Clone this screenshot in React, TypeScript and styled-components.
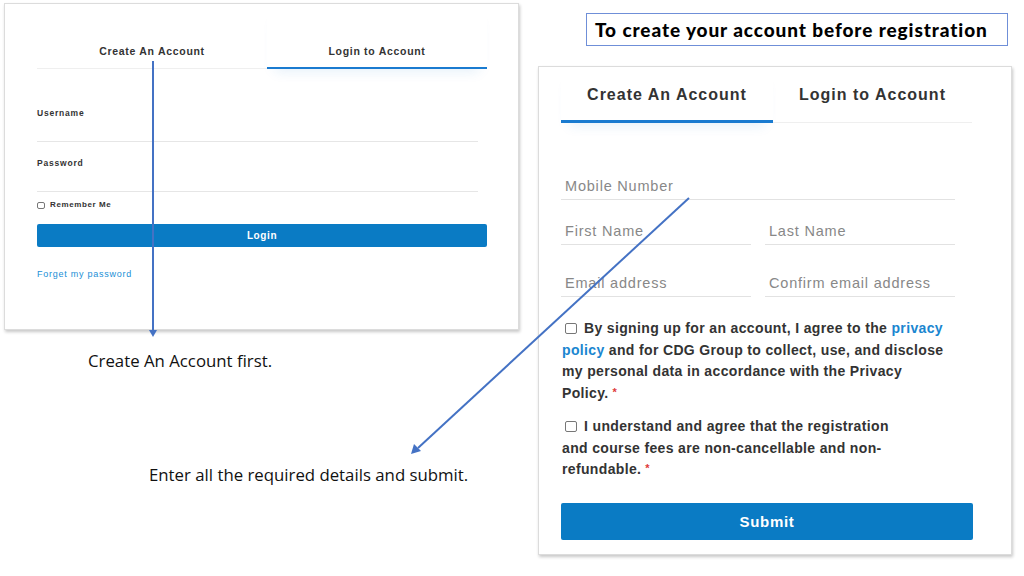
import React from 'react';
import styled, { createGlobalStyle } from 'styled-components';

const GlobalStyle = createGlobalStyle`
  html, body {
    margin: 0;
    padding: 0;
    background: #fff;
  }
  body {
    font-family: "Liberation Sans", Arial, sans-serif;
  }
`;

const Page = styled.div`
  position: relative;
  width: 1024px;
  height: 576px;
  overflow: hidden;
  display: flex;
  align-items: flex-start;
`;

const LeftColumn = styled.div`
  width: 515px;
  margin: 3px 0 0 4px;
  display: flex;
  flex-direction: column;
`;

const RightColumn = styled.div`
  width: 474px;
  margin-left: 19px;
  display: flex;
  flex-direction: column;
`;

const Card = styled.div<{ $height: number }>`
  box-sizing: border-box;
  height: ${({ $height }) => $height}px;
  background: #fff;
  border: 1px solid #dcdcdc;
  box-shadow: 1px 2px 3px rgba(0, 0, 0, 0.22);
`;

const LoginCard = styled(Card)`
  padding: 0 31px 0 32px;
`;

const SignupCard = styled(Card)`
  margin-top: 20px;
  padding: 0 39px 0 22px;
`;

const Tabs = styled.div`
  display: flex;
  align-items: flex-end;
`;

const Tab = styled.div<{ $active?: boolean; $big?: boolean; $width: number }>`
  width: ${({ $width }) => $width}px;
  text-align: center;
  font-weight: bold;
  color: #333;
  white-space: nowrap;
  font-size: ${({ $big }) => ($big ? 16 : 10.5)}px;
  letter-spacing: ${({ $big }) => ($big ? 1 : 0.7)}px;
  line-height: 20px;
  padding-top: ${({ $big }) => ($big ? 18 : 37)}px;
  padding-bottom: ${({ $big, $active }) => ($big ? ($active ? 15 : 17) : $active ? 6 : 7)}px;
  border-bottom: ${({ $active, $big }) =>
    $active ? `${$big ? 3 : 2}px solid #1a7bd0` : '1px solid #efefef'};
  box-shadow: ${({ $active }) =>
    $active ? '0 10px 12px -8px rgba(26, 123, 208, 0.12)' : 'none'};
`;

/* login form */

const LoginForm = styled.div`
  padding-top: 39px;
  display: flex;
  flex-direction: column;
`;

const SmallField = styled.div`
  width: 441px;
  margin-bottom: 16px;
`;

const SmallLabel = styled.div`
  font-size: 8.5px;
  line-height: 10px;
  font-weight: bold;
  color: #333;
  letter-spacing: 0.8px;
`;

const SmallLine = styled.div`
  height: 23px;
  border-bottom: 1px solid #e6e6e6;
`;

const RememberRow = styled.label`
  display: flex;
  align-items: center;
  gap: 5px;
  margin-top: -8px;
  font-size: 8px;
  font-weight: bold;
  color: #333;
  letter-spacing: 0.6px;
  line-height: 10px;
`;

const Box = styled.span<{ $size: number }>`
  box-sizing: border-box;
  display: inline-block;
  width: ${({ $size }) => $size}px;
  height: ${({ $size }) => $size - 1}px;
  border: 1px solid #777;
  border-radius: 2px;
  background: #fff;
  flex-shrink: 0;
`;

const Button = styled.div<{ $height: number; $big?: boolean }>`
  height: ${({ $height }) => $height}px;
  border-radius: 2px;
  background: #0a7bc4;
  color: #fff;
  font-weight: bold;
  display: flex;
  align-items: center;
  justify-content: center;
  font-size: ${({ $big }) => ($big ? 15 : 10)}px;
  letter-spacing: ${({ $big }) => ($big ? 0.7 : 0.6)}px;
`;

const LoginButton = styled(Button)`
  margin-top: 14px;
`;

const ForgetLink = styled.a`
  margin-top: 22px;
  font-size: 9px;
  line-height: 10px;
  color: #1a8fd6;
  letter-spacing: 0.75px;
  text-decoration: none;
`;

/* captions */

const Caption = styled.div<{ $indent: number; $top: number }>`
  margin: ${({ $top }) => $top}px 0 0 ${({ $indent }) => $indent}px;
  font-family: "Open Sans", "Noto Sans", sans-serif;
  font-size: 16.8px;
  line-height: 20px;
  color: #111;
  white-space: nowrap;
`;

const TitleBox = styled.div`
  box-sizing: border-box;
  margin: 13px 0 0 48px;
  width: 422px;
  height: 33px;
  border: 1px solid #6f8fd8;
  padding: 0 0 0 8px;
  display: flex;
  align-items: center;
  font-family: Lato, "DejaVu Sans", sans-serif;
  font-weight: 900;
  font-size: 19px;
  letter-spacing: 0.9px;
  color: #000;
  white-space: nowrap;
`;

/* sign up form */

const SignupBody = styled.div`
  width: 394px;
`;

const FieldRow = styled.div<{ $top: number }>`
  display: flex;
  gap: 14px;
  margin-top: ${({ $top }) => $top}px;
`;

const InputField = styled.div`
  flex: 1;
  box-sizing: border-box;
  height: 31px;
  padding: 0 0 4px 4px;
  display: flex;
  align-items: flex-end;
  border-bottom: 1px solid #e2e2e2;
  font-size: 14.5px;
  line-height: 18px;
  color: #888;
  letter-spacing: 0.8px;
  white-space: nowrap;
`;

const Consent = styled.p<{ $top: number }>`
  margin: ${({ $top }) => $top}px 0 0 1px;
  font-size: 14px;
  line-height: 21.7px;
  font-weight: bold;
  color: #333;
  letter-spacing: 0.35px;
  white-space: nowrap;
`;

const ConsentBox = styled(Box)`
  margin: 0 7px 0 3px;
  vertical-align: -1px;
`;

const Link = styled.a`
  color: #1a86d0;
  text-decoration: none;
`;

const Required = styled.span`
  color: #e03a3a;
  font-size: 11px;
  line-height: 0;
  vertical-align: 2px;
  margin-left: 4px;
`;

const SubmitButton = styled(Button)`
  margin-top: 22px;
  width: 412px;
`;

const Arrows = styled.svg`
  position: absolute;
  left: 0;
  top: 0;
  pointer-events: none;
`;

export default function App() {
  return (
    <Page>
      <GlobalStyle />
      <LeftColumn>
        <LoginCard $height={327}>
          <Tabs>
            <Tab $width={230}>Create An Account</Tab>
            <Tab $width={220} $active>
              Login to Account
            </Tab>
          </Tabs>
          <LoginForm>
            <SmallField>
              <SmallLabel>Username</SmallLabel>
              <SmallLine />
            </SmallField>
            <SmallField>
              <SmallLabel>Password</SmallLabel>
              <SmallLine />
            </SmallField>
            <RememberRow>
              <Box $size={8} />
              Remember Me
            </RememberRow>
            <LoginButton $height={23}>Login</LoginButton>
            <ForgetLink>Forget my password</ForgetLink>
          </LoginForm>
        </LoginCard>
        <Caption $indent={84} $top={21}>
          Create An Account first.
        </Caption>
        <Caption $indent={145} $top={94}>
          Enter all the required details and submit.
        </Caption>
      </LeftColumn>

      <RightColumn>
        <TitleBox>To create your account before registration</TitleBox>
        <SignupCard $height={489}>
          <Tabs>
            <Tab $width={212} $big $active>
              Create An Account
            </Tab>
            <Tab $width={199} $big>
              Login to Account
            </Tab>
          </Tabs>
          <SignupBody>
            <FieldRow $top={46}>
              <InputField>Mobile Number</InputField>
            </FieldRow>
            <FieldRow $top={14}>
              <InputField>First Name</InputField>
              <InputField>Last Name</InputField>
            </FieldRow>
            <FieldRow $top={21}>
              <InputField>Email address</InputField>
              <InputField>Confirm email address</InputField>
            </FieldRow>
          </SignupBody>
          <Consent $top={21}>
            <ConsentBox $size={12} />
            By signing up for an account, I agree to the <Link>privacy</Link>
            <br />
            <Link>policy</Link> and for CDG Group to collect, use, and disclose
            <br />
            my personal data in accordance with the Privacy
            <br />
            Policy.
            <Required>*</Required>
          </Consent>
          <Consent $top={11}>
            <ConsentBox $size={12} />
            I understand and agree that the registration
            <br />
            and course fees are non-cancellable and non-
            <br />
            refundable.
            <Required>*</Required>
          </Consent>
          <SubmitButton $height={37} $big>
            Submit
          </SubmitButton>
        </SignupCard>
      </RightColumn>

      <Arrows width={1024} height={576} viewBox="0 0 1024 576">
        <line x1={153} y1={61} x2={153} y2={330} stroke="#4472c4" strokeWidth={2} />
        <polygon points="149,330 157,330 153,337" fill="#4472c4" />
        <line x1={689} y1={198} x2={418} y2={448} stroke="#4472c4" strokeWidth={2} />
        <polygon points="411,454 414,444 421,451" fill="#4472c4" />
      </Arrows>
    </Page>
  );
}
